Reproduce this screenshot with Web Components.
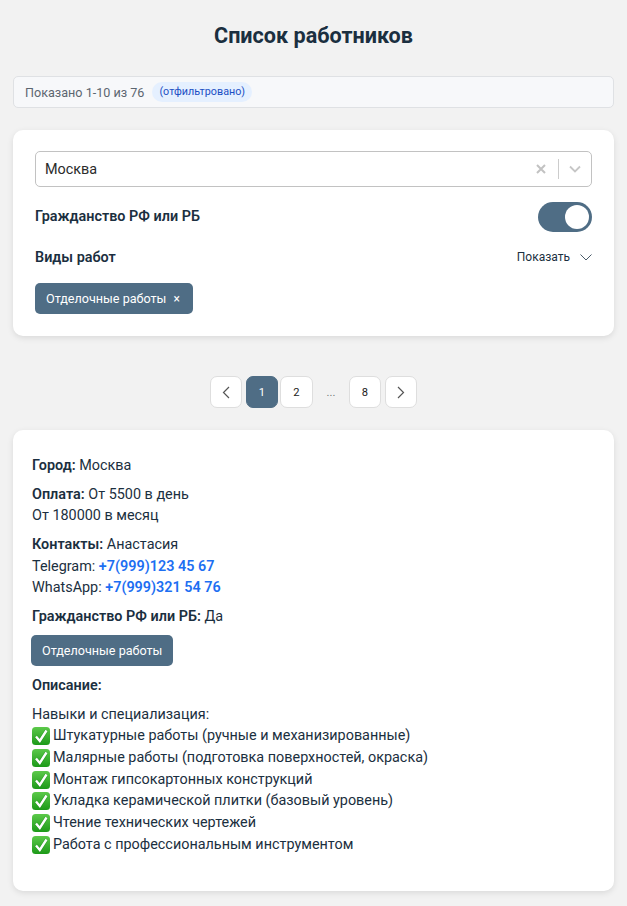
<!DOCTYPE html>
<html lang="ru"><head><meta charset="utf-8"><title>Список работников</title>
<style>
html,body{margin:0;padding:0;background:#f2f2f2}
body{font-family:Roboto,"Noto Sans",sans-serif;color:#1b2f40;height:906px;overflow:hidden}
</style></head><body>
<worker-page>
  <page-title>Список работников</page-title>
  <info-bar></info-bar>
  <filter-card></filter-card>
  <page-nav></page-nav>
  <worker-card></worker-card>
</worker-page>
<script>
function def(name, html){
  customElements.define(name, class extends HTMLElement{
    constructor(){super();this.attachShadow({mode:'open'}).innerHTML=html;}
  });
}
def('worker-page',`<style>:host{display:block;padding:0 13px}</style><slot></slot>`);
def('page-title',`<style>:host{display:block;height:76px;box-sizing:border-box;padding-top:24px;text-align:center;font-size:21.600px;line-height:24px;font-weight:700;color:#1b2f40}</style><slot></slot>`);
def('info-bar',`<style>:host{display:flex;align-items:center;gap:8px;height:32px;box-sizing:border-box;padding:0 11px;background:#f7f8fa;border:1px solid #dfe1e4;border-radius:5px;font-size:12.600px;color:#5c6670}
.b{background:#e5f0ff;color:#1b4fc4;font-size:10.780px;line-height:20px;height:20px;padding:0 7px;border-radius:10px;font-weight:400}</style><span>Показано 1-10 из 76</span><span class="b">(отфильтровано)</span>`);
def('x-tag',`<style>:host{display:inline-flex;align-items:center;background:#4f6d85;color:#fff;border-radius:5px;font-size:12.600px;box-sizing:border-box}</style><slot></slot>`);
def('x-toggle',`<style>:host{display:block;width:54px;height:30px;border-radius:15px;background:#4f6d85;position:relative}
i{position:absolute;right:3.500px;top:3px;width:24px;height:24px;border-radius:50%;background:#fff}</style><i></i>`);
def('filter-card',`<style>:host{display:block;margin-top:22px;height:206px;box-sizing:border-box;padding:21px 22px 0;background:#fff;border-radius:10px;box-shadow:0 2px 6px rgba(0,0,0,.1)}
.sel{display:flex;align-items:center;height:36px;box-sizing:border-box;border:1px solid #c2c2c2;border-radius:5px;padding:0 9px;font-size:14.400px;color:#2b2b2b}
.sel span{flex:1}
.sep{width:1px;height:20px;background:#ccc;margin:0 10px 0 11px}
.row{display:flex;justify-content:space-between;align-items:center;font-size:14.400px;font-weight:600;color:#1b2f40}
.r1{margin-top:14px;height:32px}.r2{margin-top:8px;height:32px}
.r1>span{margin-bottom:2px}
.show{display:flex;align-items:center;gap:10px;font-size:12px;font-weight:400}
x-tag{height:31px;padding:0 13px 0 11px;margin-top:10px;gap:7px}
.x{font-size:12px}
svg{display:block}
</style>
<div class="sel"><span>Москва</span>
<svg style="margin-right:1px" width="10" height="10" viewBox="0 0 10 10"><path d="M1 1l8 8M9 1l-8 8" stroke="#c2c2c2" stroke-width="2"/></svg>
<div class="sep"></div>
<svg width="12" height="8" viewBox="0 0 12 8" style="margin-right:1px"><path d="M1 1.500l5 5 5-5" fill="none" stroke="#c6c6c6" stroke-width="1.800"/></svg></div>
<div class="row r1"><span>Гражданство РФ или РБ</span><x-toggle></x-toggle></div>
<div class="row r2"><span>Виды работ</span><span class="show">Показать <svg width="12" height="7" viewBox="0 0 12 7"><path d="M.5.5L6 6 11.500.5" fill="none" stroke="#4a5b69" stroke-width="1"/></svg></span></div>
<x-tag>Отделочные работы<span class="x">×</span></x-tag>`);
def('page-nav',`<style>:host{display:flex;justify-content:center;align-items:center;margin-top:40px;height:32px;font-size:11.200px;color:#222}
b{font-weight:400;display:flex;align-items:center;justify-content:center;box-sizing:border-box;width:32px;height:32px;background:#fff;border:1px solid #dedede;border-radius:7px}
.on{background:#4f6d85;border-color:#4f6d85;color:#fff;margin:0 2px 0 4px}
.d{background:none;border:0;color:#777;width:36px}
.n{width:33px}
.l{margin-left:4px}
</style><b><svg width="8" height="13" viewBox="0 0 8 13"><path d="M7 1L1.500 6.500 7 12" fill="none" stroke="#555" stroke-width="1.200"/></svg></b><b class="on">1</b><b class="n">2</b><b class="d">...</b><b>8</b><b class="l"><svg width="8" height="13" viewBox="0 0 8 13"><path d="M1 1l5.500 5.500L1 12" fill="none" stroke="#555" stroke-width="1.200"/></svg></b>`);
const ck=`<svg class="c" width="18" height="18" viewBox="0 0 18 18"><defs><linearGradient id="g" x1="0" y1="0" x2="0" y2="1"><stop offset="0" stop-color="#5cc94a"/><stop offset="1" stop-color="#1c9a18"/></linearGradient></defs><rect width="18" height="18" rx="3.500" fill="url(#g)"/><path d="M4 9.500L7.800 14 14.500 3.500" fill="none" stroke="#0e7c10" stroke-opacity=".5" stroke-width="3.400"/><path d="M4 9.500L7.800 14 14.500 3.500" fill="none" stroke="#fff" stroke-width="2.400"/></svg>`;
const li=t=>`<div class="li">${ck}<span>${t}</span></div>`;
def('worker-card',`<style>:host{display:block;margin-top:21.500px;height:461.500px;box-sizing:border-box;padding:25.500px 19px 0;background:#fff;border-radius:10px;box-shadow:0 2px 6px rgba(0,0,0,.1);font-size:14.400px;line-height:21.600px;color:#1b2f40}
p{margin:0 0 7.200px}
b{font-weight:600}
a{color:#1d6ff2;font-weight:600;text-decoration:none}
x-tag{height:31px;padding:0 11px;display:flex;width:max-content;margin:0 0 9px -1px}
.li{display:flex;align-items:center;gap:3px;height:21.700px}
.c{flex:none}
.d{margin-top:7px}
</style>
<p><b>Город:</b> Москва</p>
<p><b>Оплата:</b> От 5500 в день<br>От 180000 в месяц</p>
<p><b>Контакты:</b> Анастасия<br>Telegram: <a>+7(999)123 45 67</a><br>WhatsApp: <a>+7(999)321 54 76</a></p>
<p><b>Гражданство РФ или РБ:</b> Да</p>
<x-tag>Отделочные работы</x-tag>
<p><b>Описание:</b></p>
<div class="d">Навыки и специализация:
${li('Штукатурные работы (ручные и механизированные)')}${li('Малярные работы (подготовка поверхностей, окраска)')}${li('Монтаж гипсокартонных конструкций')}${li('Укладка керамической плитки (базовый уровень)')}${li('Чтение технических чертежей')}${li('Работа с профессиональным инструментом')}</div>`);
</script>
</body></html>
